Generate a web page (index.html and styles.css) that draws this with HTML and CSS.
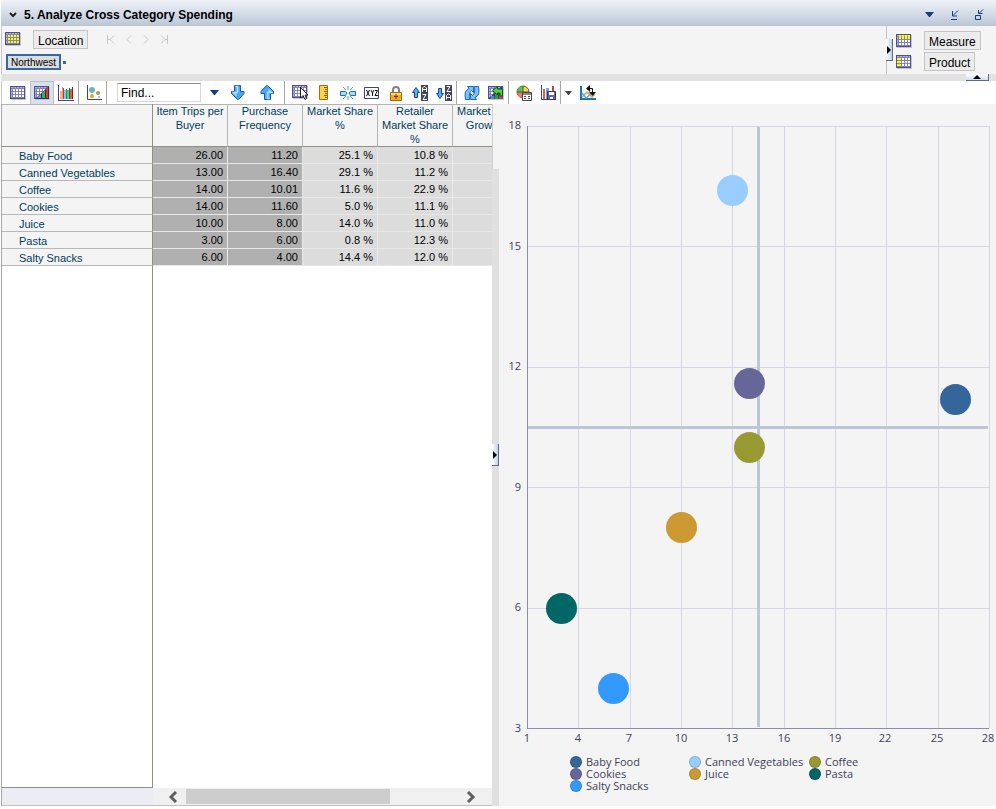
FILE: index.html
```html
<!DOCTYPE html>
<html lang="en">
<head>
  <meta charset="UTF-8">
  <meta name="viewport" content="width=device-width, initial-scale=1.0">
  <title>Analyze Cross Category Spending</title>
  <link rel="stylesheet" href="styles.css">
</head>
<body>
  <!-- Shared icon shapes -->
  <svg class="sprite" aria-hidden="true">
    <symbol id="grid" viewBox="0 0 16 14">
      <path d="M1 1h15v13h-15z" fill="#c4c4d4"/>
      <path d="M0 0h15v13h-15z" fill="#50508c"/>
      <path d="M1 1h13v11h-13z" fill="#8484bc"/>
      <path d="M1 1h2v1h-2zM4 1h2v1h-2zM7 1h2v1h-2zM10 1h2v1h-2zM13 1h1v1h-1zM1 3h1v2h-1zM1 6h1v2h-1zM1 9h1v2h-1z" fill="#b0b0dc"/>
      <path d="M3 3h2v2h-2zM6 3h2v2h-2zM9 3h2v2h-2zM12 3h2v2h-2zM3 6h2v2h-2zM6 6h2v2h-2zM9 6h2v2h-2zM12 6h2v2h-2zM3 9h2v2h-2zM6 9h2v2h-2zM9 9h2v2h-2zM12 9h2v2h-2z" fill="#fff"/>
    </symbol>
    <symbol id="caret" viewBox="0 0 9 5">
      <path d="M0 0h9l-4 5h-1z"/>
    </symbol>
    <symbol id="arrow" viewBox="0 0 16 17">
      <path d="M4.500 1.500h6v6h3.500v2l-5.500 6h-1l-6-6v-2h3z" fill="#48a8f8" stroke="#1858b0"/>
      <path d="M5.500 2.500h2v6h-4l3 3" fill="none" stroke="#b9e2ff" stroke-width="1.500"/>
    </symbol>
    <symbol id="tinyarrow" viewBox="0 0 8 14">
      <path d="M2.500 1.500h3v5h2l-3.500 5-3.500-5h2z" fill="#53b0f3" stroke="#17488f"/>
    </symbol>
  </svg>

  <div class="app">
    <header class="titlebar">
      <svg class="chevron" viewBox="0 0 9 6"><path d="M1 1l3 3 3-3" fill="none" stroke="#222" stroke-width="2"/></svg>
      <h1>5. Analyze Cross Category Spending</h1>
      <button class="win" aria-label="Menu"><svg width="9" height="5" fill="#123f7e"><use href="#caret"/></svg></button>
      <button class="win" aria-label="Minimize"><svg width="9" height="10" class="line"><path d="M8 .5l-5 5M2.500 1v5h4.500M1 9.500h6"/></svg></button>
      <button class="win" aria-label="Restore"><svg width="10" height="12" class="line"><path d="M1.500 6.500h5v4h-5zM9 .5l-3.500 3.500M4.500 1v3.500h4"/></svg></button>
    </header>

    <section class="slicer">
      <div class="slices">
        <div class="dimension">
          <svg class="gridicon" width="16" height="14"><use href="#grid"/><path d="M3 3h2v2h-2zM6 3h2v2h-2zM9 3h2v2h-2zM12 3h2v2h-2zM3 6h2v2h-2zM6 6h2v2h-2zM9 6h2v2h-2zM12 6h2v2h-2zM3 9h2v2h-2zM6 9h2v2h-2zM9 9h2v2h-2zM12 9h2v2h-2z" fill="#ff0"/></svg>
          <button class="label">Location</button>
          <nav class="pager">
            <button aria-label="First"><svg width="9" height="9"><path d="M1.500 0v9M8 .5l-4 4 4 4M4 4.500h-2"/></svg></button>
            <button aria-label="Previous"><svg width="9" height="9"><path d="M7 .5l-4 4 4 4"/></svg></button>
            <button aria-label="Next"><svg width="9" height="9"><path d="M2 .5l4 4-4 4"/></svg></button>
            <button aria-label="Last"><svg width="9" height="9"><path d="M7.500 0v9M1 .5l4 4-4 4M5 4.500h2"/></svg></button>
          </nav>
        </div>
        <div class="path">
          <button class="tag">Northwest</button>
          <span class="dot"></span>
        </div>
      </div>
      <div class="axes">
        <button class="handle side" aria-label="Collapse axes"><svg width="4" height="8"><path d="M0 0l4 4-4 4z"/></svg></button>
        <div class="axis">
          <svg class="gridicon" width="16" height="14"><use href="#grid"/><path d="M3 1h2v4h-2zM6 1h2v4h-2zM9 1h2v4h-2zM12 1h2v4h-2z" fill="#ff0"/></svg>
          <button class="label">Measure</button>
        </div>
        <div class="axis">
          <svg class="gridicon" width="16" height="14"><use href="#grid"/><path d="M1 3h4v2h-4zM1 6h4v2h-4zM1 9h4v2h-4z" fill="#ff0"/></svg>
          <button class="label">Product</button>
        </div>
      </div>
    </section>

    <div class="divider">
      <button class="handle top" aria-label="Collapse slicer"><svg width="8" height="4"><path d="M0 4l4-4 4 4z"/></svg></button>
    </div>

    <div class="toolbar">
      <div class="group views">
        <button class="tool" aria-label="Table"><svg class="gridicon" width="16" height="14"><use href="#grid"/></svg></button>
        <button class="tool active" aria-label="Table and chart"><svg width="16" height="14"><use class="gridicon" href="#grid"/><path d="M15 0v13h-14z" fill="#303048"/><path d="M5 10l2-2v4h-4z" fill="#58a8e0"/><path d="M8 7l3-3v8h-3z" fill="#38b058"/><path d="M12 3l2-2v11h-2z" fill="#e03838"/></svg></button>
        <button class="tool" aria-label="Chart"><svg class="gridicon" width="16" height="16"><path d="M0 0h1v15h15v1h-16z" fill="#44447c"/><path d="M2 6h2v8h-2z" fill="#ffb090"/><path d="M4 2h1v12h-1z" fill="#f09078"/><path d="M5 3h1v11h-1z" fill="#b84030"/><path d="M6 5h2v9h-2z" fill="#70d0f0"/><path d="M8 4h1v10h-1z" fill="#2878b0"/><path d="M9 5h2v9h-2z" fill="#58d060"/><path d="M11 3h1v11h-1z" fill="#187828"/><path d="M12 4h2v10h-2z" fill="#f05050"/><path d="M14 2h1v12h-1z" fill="#901818"/></svg></button>
      </div>
      <div class="group single">
        <button class="tool" aria-label="Scatter plot"><svg width="16" height="16"><path d="M1.500 0v14.500h14.500" stroke="#44447c" fill="none"/><circle cx="6" cy="5" r="3" fill="#6cb4c0"/><circle cx="12" cy="8" r="2" fill="#a89848"/><circle cx="6" cy="11" r="2" fill="#f09830"/><circle cx="13" cy="12" r="1" fill="#b0b058"/></svg></button>
      </div>
      <div class="group search">
        <input type="text" class="find" value="Find..." aria-label="Find">
        <button class="tool" aria-label="Find options"><svg width="9" height="5" fill="#123f7e"><use href="#caret"/></svg></button>
        <button class="tool" aria-label="Find next"><svg width="16" height="17"><use href="#arrow"/></svg></button>
        <button class="tool previous" aria-label="Find previous"><svg class="flip" width="16" height="17"><use href="#arrow"/></svg></button>
      </div>
      <div class="group">
        <button class="tool" aria-label="Select"><svg width="16" height="16"><use class="gridicon" href="#grid" width="16" height="14"/><path d="M8.500 2.500v10.500l2.500-2.500 2 4 1.500-1-1.500-3.500h3z" fill="#fff" stroke="#222"/></svg></button>
        <button class="tool" aria-label="Ruler"><svg width="10" height="16"><path d="M.5 .5h8v14h-8z" fill="#ffd24a" stroke="#a86c10"/><path d="M5 2.500h3M6 4.500h2M5 6.500h3M6 8.500h2M5 10.500h3M6 12.500h2" stroke="#905c10"/></svg></button>
        <button class="tool" aria-label="Break"><svg width="16" height="16"><path d="M.5 6.500h5l1.500 1.500-1.500 2.500h-5zM15.500 6.500h-5l-1.500 1.500 1.500 2.500h5z" fill="#a8dcfc" stroke="#2866b0"/><path d="M8 1v4M8 11v4M3 2l3 3M13 2l-3 3M3 14l3-3M13 14l-3-3" stroke="#4c9ce0"/></svg></button>
        <button class="tool" aria-label="Names"><svg width="16" height="12"><path d="M.5 .5h14v11h-14z" fill="#f8f8ff" stroke="#44447c"/><path d="M2.500 3l3 6M5.500 3l-3 6M7 3l1.500 3 1.500-3M8.500 5.500v3.500M11 3.500h2.500l-2.500 5h3" stroke="#111" fill="none"/></svg></button>
        <button class="tool" aria-label="Lock"><svg width="12" height="16"><path d="M3 8v-3q0-3 3-3t3 3v3" fill="none" stroke="#80808c" stroke-width="2"/><path d="M.5 7.500h11v8h-11z" fill="#f8a820" stroke="#a86808"/><path d="M1 8h10v2h-10z" fill="#ffd878"/><path d="M6 9v5M4 11.500h4" stroke="#604010"/></svg></button>
        <button class="tool" aria-label="Sort ascending"><svg width="16" height="16"><use href="#tinyarrow" width="8" height="14" transform="rotate(180 4 7)"/><path d="M9 0h7v16h-7z" fill="#44445c"/><path d="M10.500 7v-4l1.500-1.500h1l1.500 1.500v4M11 4.500h3M10.500 9.500h3.500l-3 5h4" stroke="#fff" fill="none"/></svg></button>
        <button class="tool" aria-label="Sort descending"><svg width="16" height="16"><use href="#tinyarrow" y="2" width="8" height="14"/><path d="M9 0h7v16h-7z" fill="#44445c"/><path d="M10.500 1.500h3.500l-3 5h4M10.500 14.500v-4l1.500-1.500h1l1.500 1.500v4M11 12.500h3" stroke="#fff" fill="none"/></svg></button>
      </div>
      <div class="group">
        <button class="tool" aria-label="Refresh"><svg width="16" height="16" fill="#78c4f8" stroke="#1f66b4"><path d="M1.500 14.500q-2-9 3.500-11l-1.500-2h6v6l-2-2q-3 2-2 9z"/><path d="M14.500 1.500q2 9-3.500 11l1.500 2h-6v-6l2 2q3-2 2-9z"/></svg></button>
        <button class="tool" aria-label="Export"><svg width="16" height="14"><use class="gridicon" href="#grid"/><path d="M1 12l13-12v13z" fill="#404058"/><path d="M3 10h3v3h-3z" fill="#3498d8"/><path d="M7 8h3v5h-3z" fill="#28a050"/><path d="M11 9h3v4h-3z" fill="#d84040"/><path d="M4.500 4.500l5-4v2.500h5v7h-2.500v-3h-2.500v2z" fill="#50d048" stroke="#085c10"/></svg></button>
      </div>
      <div class="group">
        <button class="tool" aria-label="Exception highlighting"><svg width="16" height="16"><circle cx="7" cy="7" r="6" fill="#f8d830" stroke="#505050"/><path d="M7 7v-5a5 5 0 0 1 5 5z" fill="#f8d830"/><path d="M7 7h-6a6 6 0 0 1 6-6z" fill="#50c848"/><path d="M7 7h-6a6 6 0 0 0 6 6z" fill="#f07858"/><path d="M1 7h12M7 1v12" stroke="#505050"/><path d="M6.500 7.500h9v8h-9z" fill="#fff" stroke="#444"/><path d="M7 9h8" stroke="#888" stroke-width="2"/><path d="M8 11.500h2M12 11.500h2M8 13.500h2M12 13.500h2" stroke="#444"/></svg></button>
        <button class="tool" aria-label="Save chart"><svg width="16" height="16"><path d="M1.500 0v14.500h14.500" stroke="#44447c" fill="none"/><path d="M3 4h2v10h-2z" fill="#e85848"/><path d="M6 3h3v11h-3z" fill="#60b0d8"/><path d="M12 1h2v6h-2z" fill="#d83838"/><path d="M7.500 6.500h8v8h-8z" fill="#6464b4" stroke="#30306c"/><path d="M9 7h5v3h-5zM10 12h3v2h-3z" fill="#fff"/></svg></button>
      </div>
      <button class="tool narrow" aria-label="More"><svg width="7" height="4" fill="#444"><use href="#caret"/></svg></button>
      <button class="tool" aria-label="Swap axes"><svg width="16" height="16"><path d="M1 1v13h15" stroke="#1878b0" fill="none" stroke-width="2"/><path d="M2 12l5-5 5 5 3-3" stroke="#e09850" fill="none" stroke-width="1.500"/><path d="M2 8l4 5 7-6" stroke="#58b0d8" fill="none" stroke-width="1.500"/><path d="M7 3.500h5.500v5" stroke="#111" fill="none"/><path d="M6 3.500l4-3.500v7zM9 7h7l-3.500 4z" fill="#111"/></svg></button>
    </div>

    <main class="content">
      <section class="gridpane">
        <table class="data">
          <thead>
            <tr>
              <th class="corner"></th>
              <th>Item Trips per Buyer</th>
              <th>Purchase Frequency</th>
              <th>Market Share %</th>
              <th>Retailer Market Share %</th>
              <th>Market Share Growth %</th>
            </tr>
          </thead>
          <tbody>
            <tr><th>Baby Food</th><td class="key">26.00</td><td class="key">11.20</td><td>25.1 %</td><td>10.8 %</td><td></td></tr>
            <tr><th>Canned Vegetables</th><td class="key">13.00</td><td class="key">16.40</td><td>29.1 %</td><td>11.2 %</td><td></td></tr>
            <tr><th>Coffee</th><td class="key">14.00</td><td class="key">10.01</td><td>11.6 %</td><td>22.9 %</td><td></td></tr>
            <tr><th>Cookies</th><td class="key">14.00</td><td class="key">11.60</td><td>5.0 %</td><td>11.1 %</td><td></td></tr>
            <tr><th>Juice</th><td class="key">10.00</td><td class="key">8.00</td><td>14.0 %</td><td>11.0 %</td><td></td></tr>
            <tr><th>Pasta</th><td class="key">3.00</td><td class="key">6.00</td><td>0.8 %</td><td>12.3 %</td><td></td></tr>
            <tr><th>Salty Snacks</th><td class="key">6.00</td><td class="key">4.00</td><td>14.4 %</td><td>12.0 %</td><td></td></tr>
          </tbody>
        </table>
        <div class="rowfill"></div>
        <div class="scrollbar">
          <div class="scrollcorner"></div>
          <div class="track">
            <button aria-label="Scroll left"><svg width="10" height="12"><path d="M8 1l-5 5 5 5"/></svg></button>
            <div class="rail"><div class="thumb"></div></div>
            <button aria-label="Scroll right"><svg width="10" height="12"><path d="M2 1l5 5-5 5"/></svg></button>
          </div>
        </div>
      </section>

      <div class="splitter">
        <button class="handle" aria-label="Collapse table"><svg width="4" height="8"><path d="M0 0l4 4-4 4z"/></svg></button>
      </div>

      <section class="chartpane">
        <svg class="plot" viewBox="0 0 497 644" role="img" aria-label="Trips per buyer against purchase frequency">
          <g class="gridlines">
            <path d="M28 22h462v1h-462zM28 142h462v1h-462zM28 263h462v1h-462zM28 383h462v1h-462zM28 504h462v1h-462z"/>
            <path d="M79 22h1v602h-1zM131 22h1v602h-1zM182 22h1v602h-1zM233 22h1v602h-1zM285 22h1v602h-1zM336 22h1v602h-1zM387 22h1v602h-1zM439 22h1v602h-1zM490 22h1v602h-1z"/>
          </g>
          <path class="average" d="M258 23h3v600h-3zM29 322h460v3h-460z"/>
          <path class="axisline" d="M28 22h1v602h461v1h-462z"/>
          <g class="ylabels">
            <text x="22" y="25">18</text>
            <text x="22" y="146">15</text>
            <text x="22" y="266">12</text>
            <text x="22" y="387">9</text>
            <text x="22" y="507">6</text>
            <text x="22" y="628">3</text>
          </g>
          <g class="xlabels">
            <text x="28" y="638">1</text>
            <text x="79" y="638">4</text>
            <text x="130" y="638">7</text>
            <text x="182" y="638">10</text>
            <text x="233" y="638">13</text>
            <text x="285" y="638">16</text>
            <text x="336" y="638">19</text>
            <text x="386" y="638">22</text>
            <text x="438" y="638">25</text>
            <text x="489" y="638">28</text>
          </g>
          <g class="bubbles">
            <circle cx="456.500" cy="295.500" r="15.500" fill="#336699"/>
            <circle cx="233.500" cy="86.500" r="15.500" fill="#99ccff"/>
            <circle cx="250.500" cy="343.500" r="15.500" fill="#999933"/>
            <circle cx="250.500" cy="279.500" r="15.500" fill="#666699"/>
            <circle cx="182.500" cy="423.500" r="15.500" fill="#cc9933"/>
            <circle cx="62.500" cy="504.500" r="15.500" fill="#006666"/>
            <circle cx="114.500" cy="584.500" r="15.500" fill="#3399ff"/>
          </g>
        </svg>
        <ul class="legend">
          <li class="baby">Baby Food</li>
          <li class="canned">Canned Vegetables</li>
          <li class="coffee">Coffee</li>
          <li class="cookies">Cookies</li>
          <li class="juice">Juice</li>
          <li class="pasta">Pasta</li>
          <li class="salty">Salty Snacks</li>
        </ul>
      </section>
    </main>
  </div>
</body>
</html>
```
FILE: styles.css
```css
* {
  box-sizing: border-box;
}

body {
  margin: 0;
  background: #fff;
  font-family: "Liberation Sans", Arial, sans-serif;
  font-size: 12px;
  color: #000;
}

button {
  display: flex;
  align-items: center;
  justify-content: center;
  margin: 0;
  padding: 0;
  border: 0;
  background: none;
  font-family: inherit;
  color: inherit;
}

svg {
  display: block;
  flex: none;
}

.sprite {
  position: absolute;
  width: 0;
  height: 0;
}

.gridicon {
  shape-rendering: crispEdges;
}

.app {
  margin-left: 1px;
}

/* Title bar */
.titlebar {
  display: flex;
  align-items: center;
  gap: 1px;
  height: 26px;
  padding: 4px 5px 0 8px;
  background: linear-gradient(#eff3f8, #bdc8d8);
  border-bottom: 1px solid #bcc4d0;
}

.chevron {
  width: 9px;
  height: 6px;
}

.titlebar h1 {
  flex: 1;
  margin: 0 0 0 5px;
  font-size: 12px;
  font-weight: bold;
}

.win {
  width: 24px;
  height: 20px;
}

.line {
  fill: none;
  stroke: #123f7e;
}

/* Slicer panel */
.slicer {
  display: flex;
  background: #f4f4f4;
  border-left: 1px solid #c8c8c8;
}

.slices {
  flex: 1;
  padding: 4px 4px 3px 3px;
}

.dimension {
  display: flex;
  align-items: center;
  height: 19px;
}

.dimension .gridicon {
  margin-bottom: 1px;
}

.label {
  height: 19px;
  padding: 2px 4px 0;
  border: 1px solid #c4c4c4;
  background: #ececec;
  font-size: 12px;
}

.dimension .label {
  margin-left: 12px;
}

.pager {
  display: flex;
  gap: 9px;
  margin-left: 18px;
}

.pager svg {
  fill: none;
  stroke: #c4c4c4;
}

.path {
  display: flex;
  align-items: center;
  gap: 2px;
  margin: 5px 0 0 1px;
}

.tag {
  height: 16px;
  padding: 0 3px;
  border: 2px solid #3668a8;
  background: #dcdcdc;
  font-size: 10px;
}

.dot {
  width: 3px;
  height: 3px;
  background: #3668a8;
}

.axes {
  position: relative;
  display: flex;
  flex-direction: column;
  gap: 2px;
  width: 110px;
  padding: 5px 0 3px 9px;
  border-left: 1px solid #c4c4c4;
}

.axis {
  display: flex;
  align-items: center;
  gap: 12px;
}

/* Collapse handles */
.handle {
  width: 7px;
  height: 22px;
  background: linear-gradient(to right, #fff, #c4d2e6);
  border-right: 1px solid #5c6c84;
  border-bottom: 1px solid #5c6c84;
}

.handle.side {
  position: absolute;
  left: -1px;
  top: 13px;
}

.handle.top {
  width: 23px;
  height: 7px;
  background: linear-gradient(#fff, #d4deec);
}

.divider {
  display: flex;
  justify-content: flex-end;
  height: 7px;
  padding-right: 7px;
  background: #e2e2e2;
}

/* Toolbar */
.toolbar {
  display: flex;
  height: 23px;
  background: #fff;
  border-left: 1px solid #c8c8c8;
}

.group {
  display: flex;
  padding-left: 3px;
  border-right: 1px solid #a8a8a8;
}

.group.views {
  padding-left: 4px;
}

.tool {
  width: 24px;
  height: 23px;
}

.tool.active {
  background: #d8e0ec;
  border: 1px solid #b8c0cc;
  border-bottom: 0;
}

.tool.narrow {
  width: 15px;
}

.group.search {
  align-items: center;
  padding: 0 5px 0 10px;
}

.find {
  width: 84px;
  height: 19px;
  margin-right: 1px;
  padding: 1px 3px 0;
  border: 1px solid #d4d8e0;
  border-top-color: #909090;
  background: #fff;
  font-family: inherit;
  font-size: 12px;
  color: #000;
}

.previous {
  margin-left: 5px;
}

.flip {
  transform: rotate(180deg);
}

/* Table and chart */
.content {
  display: grid;
  grid-template-columns: minmax(0, 491fr) 7px minmax(0, 497fr);
}

.gridpane {
  display: flex;
  flex-direction: column;
  overflow: hidden;
  border-left: 1px solid #a8a8a8;
  background: #fff;
}

.data {
  width: 526px;
  table-layout: fixed;
  border-spacing: 0;
  font-size: 11px;
}

.data th {
  font-weight: normal;
  color: #003c60;
}

.data thead th {
  width: 75px;
  height: 43px;
  padding: 0 1px;
  border-right: 1px solid #b4b4b4;
  border-bottom: 1px solid #909084;
  background: #f4f4f4;
  box-shadow: inset 0 1px #b4b4b4;
  line-height: 14px;
  vertical-align: top;
}

.data thead .corner {
  width: 151px;
  border-right-color: #909084;
}

.data tbody th {
  height: 17px;
  padding: 2px 0 0 17px;
  border-right: 1px solid #909084;
  border-bottom: 1px solid #b8b8b8;
  background: #f4f4f4;
  line-height: 14px;
  text-align: left;
}

.data td {
  padding: 0 4px 0 0;
  border-right: 1px solid #e8e8e8;
  border-bottom: 1px solid #e8e8e8;
  background: #dcdcdc;
  line-height: 16px;
  text-align: right;
}

.data .key {
  background: #b0b0b0;
}

.rowfill {
  flex: 1;
  width: 151px;
  border-right: 1px solid #909084;
  border-bottom: 1px solid #909084;
}

.scrollbar {
  display: flex;
  height: 18px;
  border-bottom: 1px solid #c0c0c0;
  background: #f0f0f0;
}

.scrollcorner {
  width: 151px;
  background: #ecedf4;
}

.track {
  display: flex;
  flex: 1;
  gap: 5px;
  padding: 0 13px 0 12px;
}

.track button {
  width: 16px;
}

.track path {
  fill: none;
  stroke: #606060;
  stroke-width: 3;
}

.rail {
  flex: 1;
  padding: 1px 0;
}

.thumb {
  width: 75%;
  height: 15px;
  background: #cdcdcd;
}

.splitter {
  position: relative;
  display: flex;
  align-items: center;
  background: #e0e0e0;
}

/* top stretch of the splitter is open towards the chart */
.splitter::before {
  content: "";
  position: absolute;
  left: 0;
  top: 0;
  width: 7px;
  height: 65px;
  border-left: 1px solid #d0d0d0;
  background: #f4f4f4;
}

.chartpane {
  background: #f4f4f4;
  padding-bottom: 14px;
}

.plot {
  width: 100%;
  font-family: "Open Sans", "Noto Sans", sans-serif;
  font-size: 11px;
  fill: #404058;
}

.gridlines {
  fill: #d6d6e2;
}

.average {
  fill: #bcc6d6;
}

.axisline {
  fill: #8c8cac;
}

.ylabels {
  text-anchor: end;
}

.xlabels {
  text-anchor: middle;
}

.legend {
  display: grid;
  grid-template-columns: 119px 120px auto;
  margin: 0;
  padding: 8px 0 0 71px;
  list-style: none;
  font-family: "Open Sans", "Noto Sans", sans-serif;
  font-size: 11px;
  line-height: 12px;
  color: #404058;
}

.legend li {
  display: flex;
  align-items: center;
  gap: 4px;
}

.legend li::before {
  content: "";
  flex: none;
  width: 10px;
  height: 10px;
  border: 1px solid rgba(0, 0, 0, 0.15);
  border-radius: 50%;
}

.legend .baby::before { background: #336699; }
.legend .canned::before { background: #99ccff; }
.legend .coffee::before { background: #999933; }
.legend .cookies::before { background: #666699; }
.legend .juice::before { background: #cc9933; }
.legend .pasta::before { background: #006666; }
.legend .salty::before { background: #3399ff; }
```
